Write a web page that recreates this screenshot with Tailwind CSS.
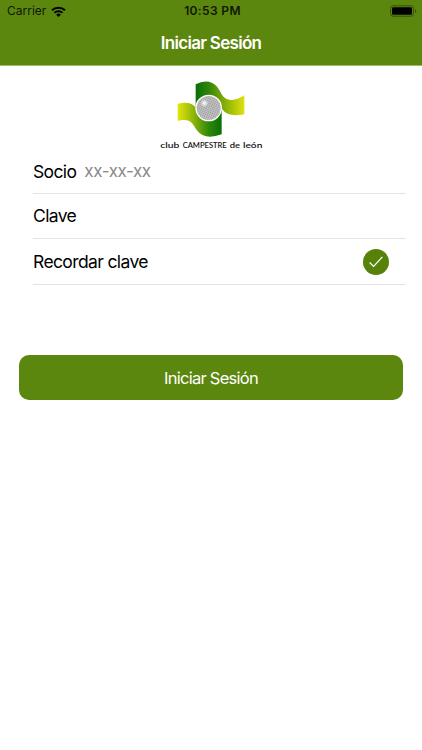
<!DOCTYPE html>
<html lang="es">
<head>
<meta charset="utf-8">
<meta name="viewport" content="width=device-width, initial-scale=1">
<title>Iniciar Sesión</title>
<script src="https://cdn.jsdelivr.net/npm/@tailwindcss/browser@4"></script>
</head>
<body class="bg-white font-['Inter','Roboto',sans-serif] text-black">
<div class="flex h-[750px] w-[422px] flex-col overflow-hidden">
  <header class="h-[66px] border-b border-[#9dba68] bg-[#5c870e]">
    <div class="grid h-[22px] grid-cols-3 items-center pr-[5px] pl-[7px]">
      <div class="flex items-center gap-[5px] text-[12px] text-[#101802]">
        <span>Carrier</span>
        <svg class="h-[11px] w-[15px]" viewBox="0 0 15 11" fill="none" stroke="#000" stroke-width="2">
          <path d="M1 4.3a9.3 9.3 0 0 1 13 0M3.4 6.9a5.9 5.9 0 0 1 8.2 0"/>
          <path d="M5.2 8.7a3.3 3.3 0 0 1 4.6 0L7.5 11z" fill="#000" stroke="none"/>
        </svg>
      </div>
      <span class="pl-px text-center text-[12px] font-semibold tracking-[0.35px] text-[#101802]">10:53 PM</span>
      <svg class="h-[12px] w-[27px] justify-self-end" viewBox="0 0 27 12">
        <rect x=".5" y=".8" width="23" height="10.4" rx="2.6" fill="none" stroke="#365008"/>
        <rect x="2" y="2.2" width="20" height="7.6" rx="1.3"/>
        <path d="M25 4v4q1.4-.5 1.4-2T25 4" fill="#365008"/>
      </svg>
    </div>
    <h1 class="flex h-[43px] items-center justify-center pt-px text-[17px] font-semibold tracking-[-0.7px] text-white">Iniciar Sesión</h1>
  </header>
  <main class="flex flex-col">
    <svg class="ml-[150px] h-[84px] w-[125px]" viewBox="0 -12 375 252" role="img" aria-label="Club Campestre de León">
      <defs>
        <linearGradient id="up" gradientUnits="userSpaceOnUse" x1="137" x2="281" y1="0" y2="0"><stop stop-color="#087008"/><stop offset=".25" stop-color="#2d8208"/><stop offset=".6" stop-color="#84ad08"/><stop offset="1" stop-color="#dce00c"/></linearGradient>
        <linearGradient id="low" gradientUnits="userSpaceOnUse" x1="85" x2="215" y1="0" y2="0"><stop stop-color="#e0e40c"/><stop offset=".35" stop-color="#8fb40a"/><stop offset=".7" stop-color="#2e8808"/><stop offset="1" stop-color="#087008"/></linearGradient>
        <pattern id="dimples" width="6" height="6" patternUnits="userSpaceOnUse" patternTransform="rotate(25)"><rect width="6" height="6" fill="#c6c6c6"/><circle cx="3" cy="3" r="2" fill="#929292"/></pattern>
        <radialGradient id="shine" cx=".32" cy=".3" r=".17"><stop stop-color="#fff"/><stop offset="1" stop-color="#fff" stop-opacity="0"/></radialGradient>
      </defs>
      <path fill="url(#up)" d="M137 43Q164 29 187 39C212 52 209 77 230 87Q253 96 283 76V133Q234 143 216 117L137 110Z"/>
      <path fill="url(#low)" d="M83 101Q120 92 135 110L215 120V193Q163 212 140 180C126 159 124 144 83 152Z"/>
      <circle cx="176" cy="114" r="40" fill="#fff"/>
      <circle cx="176" cy="114" r="36" fill="url(#dimples)"/>
      <circle cx="176" cy="114" r="36" fill="url(#shine)"/>
      <g font-family="Lato,sans-serif" font-weight="600" fill="#111">
        <text x="31" y="234" font-size="25" textLength="57" lengthAdjust="spacingAndGlyphs">club</text>
        <text x="98" y="234" font-size="20" textLength="132" lengthAdjust="spacingAndGlyphs">CAMPESTRE</text>
        <text x="239" y="234" font-size="25" textLength="31" lengthAdjust="spacingAndGlyphs">de</text>
        <text x="279" y="234" font-size="25" textLength="58" lengthAdjust="spacingAndGlyphs">león</text>
      </g>
    </svg>
    <div class="mr-4 ml-[33px] text-[17.5px] tracking-[-0.62px]">
      <div class="flex h-11 items-center gap-2 border-b border-[#e3e3e3] pt-px"><span>Socio</span><span class="text-[17px] tracking-[-0.45px] text-[#8a8a8a]">xx-xx-xx</span></div>
      <div class="flex h-[45px] items-center border-b border-[#e3e3e3] pt-px">Clave</div>
      <div class="flex h-[46px] items-center justify-between border-b border-[#e3e3e3] pt-px pr-[17px]">
        <span class="pt-px">Recordar clave</span>
        <span class="flex size-[26px] items-center justify-center rounded-full bg-[#568209]">
          <svg class="size-[14px]" viewBox="0 0 14 14" fill="none" stroke="#fff" stroke-width="1.2"><path d="M.6 7.5l4 4L13.4 1.8"/></svg>
        </span>
      </div>
    </div>
    <button class="mt-[70px] ml-[19px] flex h-[45px] w-[384px] items-center justify-center rounded-[10px] bg-[#5c870e] pt-px text-[16.5px] tracking-[-0.75px] text-white">Iniciar Sesión</button>
  </main>
</div>
</body>
</html>
